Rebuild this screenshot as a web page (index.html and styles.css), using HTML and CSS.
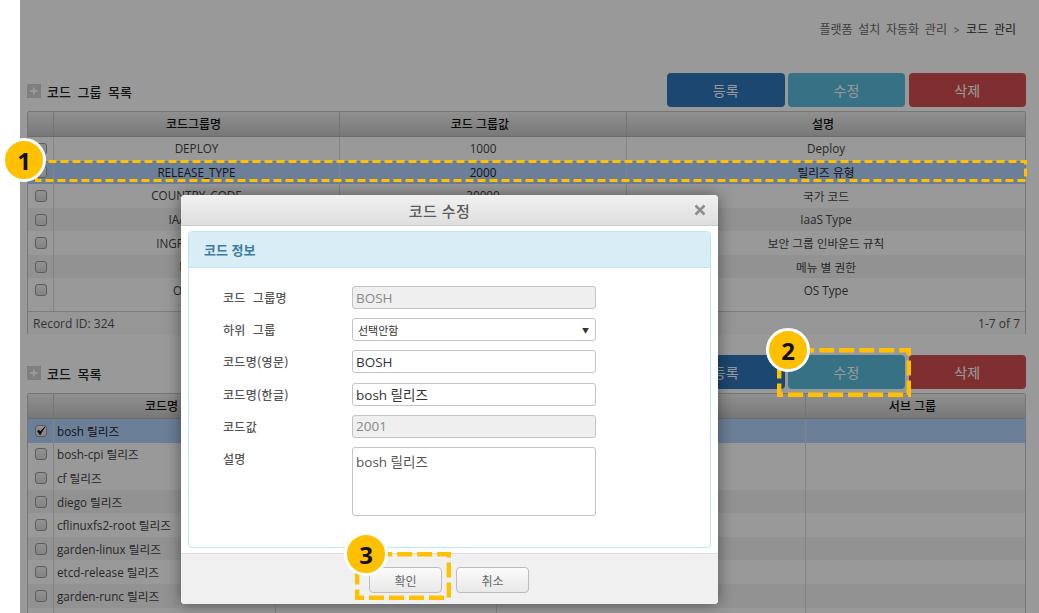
FILE: index.html
```html
<!DOCTYPE html>
<html lang="ko">
<head>
<meta charset="utf-8">
<title>코드 관리</title>
<link rel="stylesheet" href="styles.css">
</head>
<body>
<main class="page">
  <div class="crumb">플랫폼 설치 자동화 관리 <span class="gt">&gt;</span> <b>코드 관리</b></div>

  <section class="sec first">
    <div class="sec-head">
      <h2 class="sec-title"><span class="plus"><svg viewBox="0 0 14 14" width="14" height="14"><path d="M7 3.5v7M3.5 7h7" stroke="#fff" stroke-width="2"/></svg></span>코드 그룹 목록</h2>
      <div class="btns"><button class="btn blue">등록</button><button class="btn teal">수정</button><button class="btn red">삭제</button></div>
    </div>
    <div class="grid g1">
      <div class="row head"><span></span><span>코드그룹명</span><span>코드 그룹값</span><span>설명</span></div>
      <div class="row"><span><i class="cb"></i></span><span>DEPLOY</span><span>1000</span><span>Deploy</span></div>
      <div class="row sel"><span><i class="cb"></i></span><span>RELEASE_TYPE</span><span>2000</span><span>릴리즈 유형</span></div>
      <div class="row"><span><i class="cb"></i></span><span>COUNTRY_CODE</span><span>30000</span><span>국가 코드</span></div>
      <div class="row alt"><span><i class="cb"></i></span><span>IAAS_TYPE</span><span>40000</span><span>IaaS Type</span></div>
      <div class="row"><span><i class="cb"></i></span><span>INGRESS_RULE</span><span>50000</span><span>보안 그룹 인바운드 규칙</span></div>
      <div class="row alt"><span><i class="cb"></i></span><span>MENU</span><span>60000</span><span>메뉴 별 권한</span></div>
      <div class="row"><span><i class="cb"></i></span><span>OS_TYPE</span><span>70000</span><span>OS Type</span></div>
      <div class="row filler"><span></span><span></span><span></span><span></span></div>
      <div class="foot"><span>Record ID: 324</span><span>1-7 of 7</span></div>
    </div>
  </section>

  <section class="sec second">
    <div class="sec-head">
      <h2 class="sec-title"><span class="plus"><svg viewBox="0 0 14 14" width="14" height="14"><path d="M7 3.5v7M3.5 7h7" stroke="#fff" stroke-width="2"/></svg></span>코드 목록</h2>
      <div class="btns"><button class="btn blue">등록</button><button class="btn teal">수정</button><button class="btn red">삭제</button></div>
    </div>
    <div class="grid g2">
      <div class="row head"><span></span><span>코드명</span><span></span><span></span><span>서브 그룹</span></div>
      <div class="row sel"><span><i class="cb on"><svg viewBox="0 0 12 12" width="12" height="12"><path d="M2.5 6.2L5 9.8 10 1.8 5.2 6.8 3.8 5z" fill="#111" stroke="#111" stroke-width=".8"/></svg></i></span><span class="l">bosh 릴리즈</span><span></span><span></span><span></span></div>
      <div class="row"><span><i class="cb"></i></span><span class="l">bosh-cpi 릴리즈</span><span></span><span></span><span></span></div>
      <div class="row"><span><i class="cb"></i></span><span class="l">cf 릴리즈</span><span></span><span></span><span></span></div>
      <div class="row alt"><span><i class="cb"></i></span><span class="l">diego 릴리즈</span><span></span><span></span><span></span></div>
      <div class="row"><span><i class="cb"></i></span><span class="l">cflinuxfs2-root 릴리즈</span><span></span><span></span><span></span></div>
      <div class="row alt"><span><i class="cb"></i></span><span class="l">garden-linux 릴리즈</span><span></span><span></span><span></span></div>
      <div class="row"><span><i class="cb"></i></span><span class="l">etcd-release 릴리즈</span><span></span><span></span><span></span></div>
      <div class="row alt"><span><i class="cb"></i></span><span class="l">garden-runc 릴리즈</span><span></span><span></span><span></span></div>
      <div class="row"><span></span><span></span><span></span><span></span><span></span></div>
    </div>
  </section>
  <div class="overlay"></div>
</main>

<div class="modal" role="dialog">
  <header class="m-title"><span>코드 수정</span><svg class="m-x" viewBox="0 0 12 12" width="12" height="12"><path d="M1.5 1.5l9 9M10.5 1.5l-9 9" stroke="#8a8f93" stroke-width="2.6"/></svg></header>
  <div class="m-body">
    <div class="panel">
      <div class="panel-h">코드 정보</div>
      <form class="form">
        <label class="lb">코드 그룹명</label><div class="in dis">BOSH</div>
        <label class="lb">하위 그룹</label><div class="in sel-in"><span class="opt">선택안함</span><span class="arrow">▼</span></div>
        <label class="lb">코드명(영문)</label><div class="in">BOSH</div>
        <label class="lb">코드명(한글)</label><div class="in">bosh 릴리즈</div>
        <label class="lb">코드값</label><div class="in dis">2001</div>
        <label class="lb top">설명</label><div class="in area">bosh 릴리즈</div>
      </form>
    </div>
  </div>
  <footer class="m-foot"><button class="mb">확인</button><button class="mb">취소</button></footer>
</div>

<svg class="dash d1" width="992" height="23"><rect x="1.5" y="1.5" width="989" height="19" stroke-dasharray="8 4"/></svg>
<svg class="dash d2 thick" width="134" height="49"><rect x="2.2" y="2.2" width="129.6" height="44.6" stroke-dasharray="15 5"/></svg>
<svg class="dash d3 thick" width="96" height="48"><rect x="2.2" y="2.2" width="91.6" height="43.6" stroke-dasharray="15 5"/></svg>
<div class="pin p1">1</div>
<div class="pin p2">2</div>
<div class="pin p3">3</div>
</body>
</html>
```
FILE: styles.css
```css
* { box-sizing: border-box; }
html, body { margin: 0; height: 100%; overflow: hidden; background: #fff; }
body { font-family: "Open Sans", "Noto Sans CJK KR", sans-serif; font-size: 11.7px; color: #444; }

.page { position: relative; margin-left: 20px; height: 613px; overflow: hidden; padding: 0 13px 0 7px; }
.overlay { position: absolute; inset: 0; background: rgba(0,0,0,.4); }

.crumb { height: 73px; padding: 21px 10px 0 0; text-align: right; font-size: 12px; line-height: 18px; color: #6a6a6a; word-spacing: 2.6px; }
.crumb b { font-weight: 400; color: #333; }
.gt { font-size: 10px; margin: 0 1px; }

.sec-head { display: flex; justify-content: space-between; align-items: center; height: 34px; }
.sec-title { margin: 0; display: flex; align-items: center; gap: 6px; font-size: 13px; font-weight: 500; color: #222; word-spacing: 3.2px; position: relative; top: 1px; }
.plus { display: block; width: 14px; height: 14px; background: #d4d4d4; }
.plus svg { display: block; }

.btns { display: flex; gap: 3.25px; }
.btn { width: 117.5px; height: 34px; border: 0; border-radius: 4px; color: #fff; font: 14px "Noto Sans CJK KR", sans-serif; }
.blue { background: #3077bb; }
.teal { background: #5bbcde; }
.red { background: #d44f4f; }

.grid { margin-top: 4px; border: 1px solid #c5c5c5; border-radius: 2px; background: #fff; }
.first .grid { height: 224px; }
.second { margin-top: 20px; }
.second .grid { margin-top: 4px; }

.row { display: grid; height: 23.58px; align-items: stretch; }
.g1 .row { grid-template-columns: 25px 286px 287px 1fr; }
.g2 .row { grid-template-columns: 25px 222px 221px 309px 1fr; }
.row > span { display: flex; align-items: center; justify-content: center; padding-bottom: 1px; border-left: 1px solid #dcdcdc; white-space: nowrap; overflow: hidden; }
.row > span:first-child { border-left: 0; padding-bottom: 0; }
.row > span.l { justify-content: flex-start; padding-left: 3px; }
.row.alt { background: #f3f3f3; }
.row.sel { background: #b4d4ff; color: #222; }
.row.head { height: 25px; background: linear-gradient(#f0f0f0, #c8c8c8); border-bottom: 1px solid #b5b5b5; font-size: 12px; font-weight: 500; color: #111; }
.row.head > span { border-left-color: #c4c4c4; padding-right: 6px; }
.row.filler { height: 9px; }
.foot { height: 24px; display: flex; justify-content: space-between; align-items: center; padding: 0 5px; border-top: 1px solid #d0d0d0; background: #fafafa; color: #555; font-size: 12px; }

.cb { display: block; width: 12px; height: 12px; border: 1px solid #999; border-radius: 3px; background: linear-gradient(#f2f2f2, #dcdcdc); }
.cb svg { display: block; margin: -1px; }

.modal { position: absolute; left: 181px; top: 195px; width: 537px; height: 409px; display: flex; flex-direction: column; background: #fff; border-radius: 4px; box-shadow: 0 0 16px rgba(0,0,0,.45); overflow: hidden; }
.m-title { position: relative; height: 31px; flex: none; display: flex; align-items: center; justify-content: center; padding-right: 20px; background: linear-gradient(#f1f1f1, #dedede); border-bottom: 1px solid #c9c9c9; font: 500 15px "Noto Sans CJK KR", sans-serif; color: #5c5c5c; letter-spacing: .4px; }
.m-x { position: absolute; right: 12px; top: 9px; }
.m-body { flex: 1; padding: 5px 7px 5px; min-height: 0; }
.panel { height: 100%; border: 1px solid #bce8f1; border-radius: 4px; background: #fff; overflow: hidden; }
.panel-h { height: 36px; padding-left: 15px; display: flex; align-items: center; background: #d9edf7; border-bottom: 1px solid #bce8f1; font: 700 13px "Noto Sans CJK KR", sans-serif; color: #3b7c9c; }
.form { display: grid; grid-template-columns: 129px 244px; grid-auto-rows: 23px; column-gap: 0; row-gap: 9.2px; padding: 18px 0 0 34px; }
.lb { display: flex; align-items: center; font: 500 12px "Noto Sans CJK KR", sans-serif; color: #555; letter-spacing: .3px; word-spacing: 3.5px; }
.lb.top { align-items: flex-start; padding-top: 3px; }
.in { display: flex; align-items: center; padding: 0 3px; border: 1px solid #c4c4c4; border-radius: 3px; background: #fff; font-size: 13.5px; color: #333; }
.in.dis { background: #efefef; color: #888; }
.sel-in { justify-content: space-between; }
.opt { font-size: 11px; padding-left: 2px; }
.arrow { font-size: 7px; color: #333; padding-right: 3px; }
.in.area { align-items: flex-start; height: 69px; padding-top: 3px; color: #555; }
.m-foot { flex: none; height: 51px; display: flex; justify-content: flex-start; align-items: center; gap: 14px; padding: 2px 0 0 188px; background: #f0f0f0; border-top: 1px solid #dcdcdc; }
.mb { width: 73px; height: 26px; border: 1px solid #bdbdbd; border-radius: 4px; background: linear-gradient(#fbfbfb, #e8e8e8); color: #666; font: 12px "Noto Sans CJK KR", sans-serif; }

.dash { position: absolute; display: block; }
.dash rect { fill: none; stroke: #ffc000; stroke-width: 3; }
.dash.thick rect { stroke-width: 4.4; }
.d1 { left: 35px; top: 160px; }
.d2 { left: 777px; top: 348px; }
.d3 { left: 355px; top: 552px; }

.pin { position: absolute; display: flex; align-items: center; justify-content: center; width: 44px; height: 44px; border: 3px solid #fff; border-radius: 50%; background: #ffc000; color: #111; font: 700 24px "Open Sans", sans-serif; }
.p1 { left: 2px; top: 138px; }
.p2 { left: 766px; top: 328px; }
.p3 { left: 344px; top: 532px; }
```
